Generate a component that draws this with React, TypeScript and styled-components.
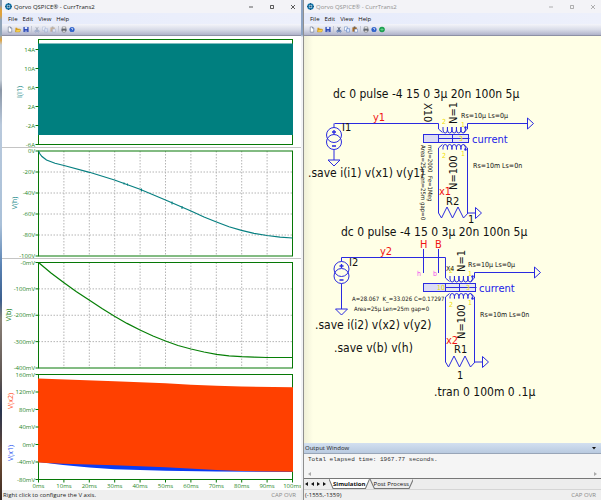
import React from "react";
import styled, { createGlobalStyle } from "styled-components";

const UI = `"Open Sans", "Noto Sans", sans-serif`;
const TAHOMA = `"DejaVu Sans Condensed", "DejaVu Sans", sans-serif`;

const GlobalStyle = createGlobalStyle`
  * { box-sizing: border-box; }
  body { margin: 0; background: #fff; font-family: ${UI}; font-size: 6px; }
  button { font: inherit; color: inherit; background: none; border: 0; padding: 0; margin: 0; }
`;

const Desktop = styled.main`
  display: grid;
  grid-template-columns: 2px minmax(0, 299fr) 2px minmax(0, 298fr);
  height: 100vh;
  overflow: hidden;
`;
const Wallpaper = styled.div`
  background: linear-gradient(#8a9bb0 0 1%, #e0a23a 2% 3%, #8fa3b8 4% 7%, #e0a23a 8%, #c3ccd6 9% 16%, #8b96a6 18%, #b9c9dc 25%, #a9c0d8 45%, #5a83b4 53%, #3c5f8e 60%, #8a8078 64%, #5b5350 76%, #28344f 82%, #6d4a32 92%, #3a2b25);
`;
const Gap = styled.div`
  background: linear-gradient(#8da4c4 0 7%, #f2f3f6 7.4% 97.6%, #e8e8e8 98%);
`;
const Window = styled.section<{ $framed?: boolean }>`
  display: flex;
  flex-direction: column;
  min-width: 0;
  min-height: 0;
  background: #fff;
  border-left: ${(p) => (p.$framed ? "1px solid #8f8f8f" : "0")};
`;
const TitleBar = styled.header<{ $inactive?: boolean }>`
  display: flex;
  align-items: center;
  flex: 0 0 13px;
  padding: 0 4px 0 3px;
  gap: 2px;
  background: #f3f3f7;
  color: ${(p) => (p.$inactive ? "#909090" : "#1a1a1a")};
`;
const Title = styled.h1`
  flex: 1;
  margin: 0;
  font-size: 6px;
  line-height: 12px;
  font-weight: 400;
`;
const Controls = styled.div`
  display: flex;
  gap: 13px;
`;
const ControlButton = styled.button`
  display: flex;
  width: 8px;
  height: 8px;
  align-items: center;
  justify-content: center;
`;
const MenuBar = styled.nav`
  display: flex;
  align-items: center;
  flex: 0 0 11px;
  gap: 5px;
  padding-left: 6px;
  background: linear-gradient(90deg, #e6ebfb, #edf0fb);
  color: #111;
`;
const ToolBar = styled.div`
  display: flex;
  align-items: center;
  flex: 0 0 12px;
  gap: 2px;
  padding-left: 5px;
  background: linear-gradient(#f4f5fa, #d9dce8 50%, #b0b3ca);
  border-bottom: 1px solid #8d90a4;
`;
const ToolButton = styled.button<{ $faded?: boolean }>`
  display: flex;
  width: 6px;
  height: 7px;
  opacity: ${(p) => (p.$faded ? 0.4 : 1)};
`;
const Divider = styled.span`
  width: 1px;
  height: 7px;
  background: #c2c5d3;
`;
const StatusBar = styled.footer`
  display: flex;
  align-items: center;
  justify-content: space-between;
  flex: 0 0 10px;
  padding: 0 5px 0 1px;
  background: #efefef;
  color: #222;
`;
const Keys = styled.span`
  color: #8a8a8a;
`;
const Panes = styled.div`
  display: grid;
  flex: 1;
  min-height: 0;
  grid-template-rows: minmax(0, 112fr) minmax(0, 111fr) minmax(0, 112fr) minmax(0, 119fr);
`;
const Plot = styled.svg`
  display: block;
  width: 100%;
  height: 100%;
  min-height: 0;
  font-family: ${UI};
  font-size: 6px;
`;
const TickText = styled.text`
  fill: #1f861f;
`;
const TraceName = styled.text<{ $color: string }>`
  fill: ${(p) => p.$color};
  font-size: 7px;
  text-anchor: middle;
`;
const Sheet = styled.div`
  flex: 1;
  min-height: 0;
  background: linear-gradient(90deg, #efefd8, #ffffe6 3%);
`;
const Drawing = styled.svg`
  display: block;
  width: 100%;
  height: 100%;
  fill: none;
  stroke: #2a2ae0;
  stroke-width: 1px;
`;
type LabelProps = { $color?: string; $size?: number };
const Label = styled.text<LabelProps>`
  stroke: none;
  fill: ${(p) => p.$color ?? "#111"};
  font-family: ${TAHOMA};
  font-size: ${(p) => p.$size ?? 11}px;
  white-space: pre;
`;
const OutputTitle = styled.div`
  display: flex;
  align-items: center;
  justify-content: space-between;
  flex: 0 0 11px;
  padding: 0 3px 0 1px;
  background: linear-gradient(#d3e0f0, #b9cae0);
  border-bottom: 1px solid #98a5b8;
  color: #222;
`;
const OutputBody = styled.div`
  flex: 0 0 24px;
  display: flex;
  flex-direction: column;
  justify-content: space-between;
  padding: 2px 4px 0;
  background: #f5f5f5;
`;
const OutputText = styled.pre`
  margin: 0;
  font: 6px/8px "Liberation Mono", monospace;
  color: #333;
`;
const ScrollRow = styled.div`
  display: flex;
  justify-content: space-between;
  padding: 0 0 2px;
`;
const Tabs = styled.div`
  display: flex;
  align-items: flex-start;
  flex: 0 0 12px;
  border-top: 1px solid #777;
  border-bottom: 1px solid #d5d5d5;
  background: #ededed;
`;
const TabArrows = styled.div`
  display: flex;
  width: 25px;
  gap: 3px;
  padding: 3px 0 0 1px;
`;
const ArrowButton = styled.button`
  display: flex;
  width: 3px;
  height: 4px;
`;
const TabSvg = styled.svg`
  position: absolute;
  inset: 0;
  width: 100%;
  height: 100%;
  stroke: #777;
  stroke-width: 1px;
`;
const Tab = styled.button<{ $active?: boolean }>`
  position: relative;
  height: 10px;
  padding: 0 4px;
  line-height: 9px;
  font-weight: ${(p) => (p.$active ? 700 : 400)};
  color: #111;
  ${TabSvg} { fill: ${(p) => (p.$active ? "#fff" : "#eee")}; }
`;
const TabText = styled.span`
  position: relative;
`;

const Logo = () => (
  <svg width="7" height="7" viewBox="0 0 14 14" aria-hidden="true">
    <circle cx="7" cy="7" r="5" fill="#b9e2f3" stroke="#1674a8" strokeWidth="3" />
    <path d="M7 0v3M7 11v3M0 7h3M11 7h3" stroke="#155780" strokeWidth="2" />
    <circle cx="7" cy="7" r="2.2" fill="#1f4f78" />
  </svg>
);

const toolIcons: Record<string, React.ReactNode> = {
  New: <path d="M3 1h5l3 3v9H3zM8 1v3h3" fill="#fff" stroke="#3c4c70" />,
  Open: <><path d="M1 12V3h4l1 2h5v7z" fill="#d99b18" /><path d="M3 7h11l-3 6H1z" fill="#f6cf4c" stroke="#a36c00" strokeWidth=".7" /></>,
  Save: <><path d="M1 1h12v12H1z" fill="#2846b4" /><path d="M4 1h6v5H4z" fill="#dbe4ff" /><path d="M4 9h6v4H4z" fill="#8798d8" /></>,
  Cut: <><path d="M4 1l5 9M10 1L5 10" stroke="#333e50" strokeWidth="1.6" /><circle cx="4" cy="11" r="2" fill="none" stroke="#1c4ea0" strokeWidth="1.5" /><circle cx="10" cy="11" r="2" fill="none" stroke="#1c4ea0" strokeWidth="1.5" /></>,
  Copy: <><path d="M1 1h7v8H1z" fill="#fff" stroke="#3c65b0" /><path d="M6 5h7v8H6z" fill="#dce9ff" stroke="#3c65b0" /></>,
  Paste: <><path d="M1 2h10v10H1z" fill="#a66a23" /><path d="M4 0h4v3H4z" fill="#555" /><path d="M6 6h7v7H6z" fill="#fff" stroke="#3c65b0" /></>,
  Print: <><path d="M3 1h8v5H3z" fill="#fff" stroke="#444" /><path d="M1 5h12v6H1z" fill="#666b74" /><path d="M4 9h6v4H4z" fill="#fff" stroke="#444" /></>,
  Help: <><circle cx="7" cy="7" r="6" fill="#2b5fc9" /><path d="M5 5q2-3 4 0 0 2-2 3M7 10v1" fill="none" stroke="#fff" strokeWidth="1.6" /></>,
  Run: <><circle cx="7" cy="7" r="6.5" fill="#179c4a" /><path d="M3 7h8M7 3v8" stroke="#7ce0a0" strokeWidth="1.5" /></>,
};

function Chrome({ inactive, editable }: { inactive?: boolean; editable?: boolean }) {
  const names = ["New", "Open", "Save", "|", "Cut", "Copy", "Paste", "|", "Print", "Help"];
  if (editable) names.push("Run");
  return (
    <>
      <TitleBar $inactive={inactive}>
        <Logo />
        <Title>Qorvo QSPICE® - CurrTrans2</Title>
        <Controls>
          {[["Minimize", "M2 4h4"], ["Maximize", "M2.5 2.5h3v3h-3z"], ["Close", "M2 2l4 4M6 2l-4 4"]].map(([n, d]) => (
            <ControlButton key={n} aria-label={n}>
              <svg width="8" height="8" viewBox="0 0 8 8"><path d={d} fill="none" stroke="currentColor" strokeWidth=".7" /></svg>
            </ControlButton>
          ))}
        </Controls>
      </TitleBar>
      <MenuBar aria-label="Menu">
        {["File", "Edit", "View", "Help"].map((m) => <button key={m}>{m}</button>)}
      </MenuBar>
      <ToolBar role="toolbar">
        {names.map((n, i) => n === "|" ? <Divider key={i} /> : (
          <ToolButton key={n} aria-label={n} $faded={!editable && ["Cut", "Copy", "Paste"].includes(n)}>
            <svg width="6" height="7" viewBox="0 0 14 14">{toolIcons[n]}</svg>
          </ToolButton>
        ))}
      </ToolBar>
    </>
  );
}

const LEFT = 38.5;
const RIGHT = 292.5;
const STEP = 25.4;

type PaneProps = {
  y: number; h: number; top: number; bottom: number; ticks: string[];
  first?: number; grid?: boolean; children: React.ReactNode;
};
function Pane({ y, h, top, bottom, ticks, first, grid, children }: PaneProps) {
  const start = first ?? top;
  const gap = (bottom - start) / (ticks.length - 1);
  return (
    <Plot viewBox={`2 ${y} 299 ${h}`} preserveAspectRatio="none">
      {grid && (
        <g stroke="#b4b4b4" strokeDasharray="1.5 1.5">
          {Array.from({ length: 9 }, (_, i) => (
            <path key={i} d={`M${LEFT + STEP * (i + 1)} ${top}V${bottom}`} />
          ))}
          {ticks.slice(1, -1).map((t, i) => <path key={t} d={`M${LEFT} ${start + gap * (i + 1)}H${RIGHT}`} />)}
        </g>
      )}
      <rect x={LEFT} y={top} width={RIGHT - LEFT} height={bottom - top} fill="none" stroke="#067806" />
      {children}
      {ticks.map((t, i) => (
        <g key={t}>
          <path d={`M35.5 ${start + gap * i}H38.5`} stroke="#067806" />
          <TickText x="35" y={start + gap * i + 2} textAnchor="end">{t}</TickText>
        </g>
      ))}
    </Plot>
  );
}

const curve = (pts: number[][]) => "M" + pts.map((p) => p.join(" ")).join("L");

function Waveforms() {
  return (
    <Panes>
      <Pane y={36} h={112} top={39.5} bottom={144.5} first={49.5} ticks={["14A", "10A", "6A", "2A", "-2A", "-6A"]}>
        <rect x="38" y="43.5" width="255" height="91.5" fill="#007f7f" />
        <path d="M2 147.5H301" stroke="#c4c4c4" />
        <TraceName $color="#118585" transform="translate(22 92) rotate(-90)">I(I1)</TraceName>
      </Pane>
      <Pane y={148} h={111} top={151} bottom={256} grid ticks={["0V", "-20V", "-40V", "-60V", "-80V", "-100V"]}>
        <path
          d={curve([[38.5, 151], [40, 154], [42, 156.5], [46.5, 160], [55, 163.3], [64, 165.5], [89.5, 172.3], [114.5, 180], [140, 189.3], [165.5, 200], [191, 211], [204, 217], [216.5, 222], [229, 226.8], [241.5, 230.3], [254, 233.3], [267, 235.5], [280, 237.2], [292.5, 238]])}
          fill="none" stroke="#067f80" strokeWidth="1.2"
        />
        <path d="M124 182.5v2M127.5 183.5v2M141.5 188.5v3M172 201.5v3M182 206v3" stroke="#067f80" />
        <path d="M2 258.5H301" stroke="#c4c4c4" />
        <TraceName $color="#118585" transform="translate(17 203) rotate(-90)">V(h)</TraceName>
      </Pane>
      <Pane y={259} h={112} top={262.5} bottom={368} grid ticks={["-0mV", "-100mV", "-200mV", "-300mV", "-400mV"]}>
        <path
          d={curve([[38.5, 262.5], [51, 273], [64, 282.7], [76.5, 291.8], [89.5, 300.3], [102, 308.5], [114.5, 316.3], [127, 323.4], [140, 330], [153, 336], [165.5, 341], [178, 345.5], [191, 349], [204, 352], [216.5, 354.3], [229, 355.8], [241.5, 356.7], [254, 357.2], [267, 357.5], [292.5, 357.5]])}
          fill="none" stroke="#067f06" strokeWidth="1.2"
        />
        <TraceName $color="#178017" transform="translate(11 315) rotate(-90)">V(b)</TraceName>
      </Pane>
      <Pane y={371} h={119} top={374.5} bottom={479.5} ticks={["160mV", "120mV", "80mV", "40mV", "0mV", "-40mV", "-80mV"]}>
        <path d={curve([[38, 462], [63, 465], [89.5, 467.5], [114.5, 469.3], [165.5, 470.7], [216.5, 471.5], [293, 472], [293, 460], [38, 460]]) + "Z"} fill="#0a3cf5" />
        <path d={curve([[38, 378.5], [114.5, 381.3], [165.5, 383.3], [191, 384.7], [216.5, 385.8], [241.5, 386.5], [293, 387.3], [293, 471.7], [241.5, 471], [216.5, 470], [165.5, 467.3], [114.5, 465.3], [63, 463.8], [38, 462.5]]) + "Z"} fill="#ff4000" />
        <TraceName $color="#ff4b18" transform="translate(13 401) rotate(-90)">V(x2)</TraceName>
        <TraceName $color="#2450f0" transform="translate(13 453) rotate(-90)">V(x1)</TraceName>
        {Array.from({ length: 11 }, (_, i) => (
          <g key={i}>
            <path d={`M${LEFT + STEP * i} 479.5v3`} stroke="#067806" />
            <TickText x={LEFT + STEP * i} y="488" textAnchor="middle">{i * 10}ms</TickText>
          </g>
        ))}
      </Pane>
    </Panes>
  );
}

/* Current source with its top wire entry at (x, y) and ground at groundY. */
function Source({ x, y, groundY }: { x: number; y: number; groundY: number }) {
  return (
    <g>
      <path d={`M${x} ${y}v4M${x} ${y + 26}V${groundY}M${x - 6} ${groundY}h12l-6 6z`} />
      <circle cx={x} cy={y + 11.5} r="7.5" />
      <circle cx={x} cy={y + 18.5} r="7.5" />
      <path d={`M${x - 2} ${y + 8.5}h4m-2 -2v4M${x - 2} ${y + 22.5}h4`} strokeWidth="1.3" />
    </g>
  );
}

/* Two windings on a core, with load resistor and output arrows. */
function Transformer({ dx, dy, coreLeft }: { dx: number; dy: number; coreLeft: number }) {
  const xs = [443, 447.5, 452, 456.5, 461];
  return (
    <g transform={`translate(${dx} ${dy})`}>
      <rect x={coreLeft} y="134.5" width={438.5 - coreLeft} height="8" fill="#dcdcf4" />
      <rect x="438.5" y="134.5" width="30" height="8" fill="#e8e8ee" />
      <path d="M452.5 134.5v8M438.5 138.5h31" />
      <path d="M438.5 129l4 3.5M463.5 132.5l4 -3.5V123.5H527.5" />
      <path d={xs.map((x) => `M${x} 127v3q0 3 2.2 3t2.2 -3v-3`).join("")} />
      <path d="M438.5 213V148l4 -3.5M463.5 144.5l4 3.5V213H475" />
      <path d={xs.map((x) => `M${x} 149.5v-2q0 -3 2.2 -3t2.2 3v2`).join("")} />
      <path d="M527.5 118v11l6 -5.5zM475.5 207.5v11l6 -5.5z" />
      <path d="M438.5 213l3 5 5.5 -11 5.5 11 5.5 -11 5.5 11 4.5 -5" />
      <circle cx="465.5" cy="127.5" r="1.2" fill="#2a2ae0" stroke="none" />
      <circle cx="465.5" cy="149.5" r="1.2" fill="#2a2ae0" stroke="none" />
      <Label $size={7} $color="#f0e000" x="442" y="124">2</Label>
      <Label $size={7} $color="#f0e000" x="461" y="127">1</Label>
      <Label $size={7} $color="#f0e000" x="442" y="158">2</Label>
      <Label $size={7} $color="#f0e000" x="461" y="156">1</Label>
      <Label $size={7} $color="#f0e000" x="459" y="141">3</Label>
    </g>
  );
}

type Note = { t: string; x: number; y: number; s?: number; c?: string; r?: number };
const RED = "#f01414";
const BLUE = "#2222e6";
const notes: Note[] = [
  { t: "dc 0 pulse -4 15 0 3µ 20n 100n 5µ", x: 333, y: 98, s: 12 },
  { t: "I1", x: 342, y: 131 },
  { t: "y1", x: 373, y: 121, c: RED },
  { t: ".save i(i1) v(x1) v(y1)", x: 308, y: 177, s: 12 },
  { t: "X10", x: 424, y: 103, r: 90 },
  { t: "N=1", x: 457, y: 124, r: -90 },
  { t: "N=100", x: 457, y: 190, r: -90 },
  { t: "Rs=10µ Ls=0µ", x: 461, y: 118, s: 7 },
  { t: "Rs=10m Ls=0n", x: 473, y: 168, s: 7 },
  { t: "current", x: 472, y: 143, c: BLUE },
  { t: "x1", x: 439, y: 195, c: RED },
  { t: "R2", x: 446, y: 205 },
  { t: "1", x: 468, y: 223 },
  { t: "mU=2000  Fe=1Meg", x: 428, y: 145, s: 6, r: 90 },
  { t: "Area=25µ Len=25m gap=0", x: 421, y: 145, s: 6, r: 90 },
  { t: "dc 0 pulse -4 15 0 3µ 20n 100n 5µ", x: 341, y: 236, s: 12 },
  { t: "I2", x: 349, y: 266 },
  { t: "y2", x: 380, y: 255, c: RED },
  { t: "H", x: 420, y: 248, c: RED },
  { t: "B", x: 435, y: 248, c: RED },
  { t: "h", x: 417, y: 276, s: 7, c: "#f050f0" },
  { t: "b", x: 433, y: 276, s: 7, c: "#f050f0" },
  { t: "X4", x: 446, y: 271, s: 7 },
  { t: "N=1", x: 465, y: 272, r: -90 },
  { t: "N=100", x: 465, y: 339, r: -90 },
  { t: "Rs=10µ Ls=0µ", x: 468, y: 267, s: 7 },
  { t: "Rs=10m Ls=0n", x: 480, y: 317, s: 7 },
  { t: "current", x: 479, y: 292, c: BLUE },
  { t: "10", x: 437, y: 290, s: 7, c: "#f0e000" },
  { t: "A=28.067  K_=33.026 C=0.17297", x: 352, y: 301, s: 6 },
  { t: "Area=25µ Len=25m gap=0", x: 354, y: 311, s: 6 },
  { t: ".save i(i2) v(x2) v(y2)", x: 315, y: 329, s: 12 },
  { t: ".save v(b) v(h)", x: 334, y: 352, s: 12 },
  { t: "x2", x: 446, y: 344, c: RED },
  { t: "R1", x: 454, y: 353 },
  { t: "1", x: 457, y: 379 },
  { t: ".tran 0 100m 0 .1µ", x: 434, y: 396, s: 12 },
];

function Schematic() {
  return (
    <Drawing viewBox="304 36 297 407" preserveAspectRatio="xMinYMin meet">
      <path d="M334.5 123.5H438.5V129M341.5 257.5H445.5V278M423.5 249v24M438.5 249v24" />
      <Source x={334} y={123.5} groundY={160} />
      <Source x={341.5} y={257.5} groundY={309} />
      <Transformer dx={0} dy={0} coreLeft={423.5} />
      <Transformer dx={7} dy={149} coreLeft={416.5} />
      {notes.map((n, i) => (
        <Label key={i} $size={n.s} $color={n.c} transform={`translate(${n.x} ${n.y}) rotate(${n.r ?? 0})`}>{n.t}</Label>
      ))}
    </Drawing>
  );
}

const Triangle = ({ left, color }: { left?: boolean; color?: string }) => (
  <svg width="3" height="4" viewBox="0 0 3 4" aria-hidden="true">
    <path d={left ? "M3 0v4L0 2z" : "M0 0v4l3-2z"} fill={color ?? "#111"} />
  </svg>
);

export default function App() {
  return (
    <>
      <GlobalStyle />
      <Desktop>
        <Wallpaper />
        <Window>
          <Chrome />
          <Waveforms />
          <StatusBar>
            <span>Right click to configure the V axis.</span>
            <Keys>CAP OVR</Keys>
          </StatusBar>
        </Window>
        <Gap />
        <Window $framed>
          <Chrome inactive editable />
          <Sheet><Schematic /></Sheet>
          <OutputTitle>
            <span>Output Window</span>
            <ControlButton aria-label="Window menu">
              <svg width="4" height="3" viewBox="0 0 4 3"><path d="M0 0h4L2 2.5z" fill="#111" /></svg>
            </ControlButton>
          </OutputTitle>
          <OutputBody>
            <OutputText>Total elapsed time: 1967.77 seconds.</OutputText>
            <ScrollRow><Triangle left color="#aaa" /><Triangle color="#aaa" /></ScrollRow>
          </OutputBody>
          <Tabs>
            <TabArrows>
              {["First", "Previous", "Next", "Last"].map((n, i) => (
                <ArrowButton key={n} aria-label={n}><Triangle left={i < 2} /></ArrowButton>
              ))}
            </TabArrows>
            {["Simulation", "Post Process"].map((n, i) => (
              <Tab key={n} $active={i === 0}>
                <TabSvg viewBox="0 0 40 10" preserveAspectRatio="none"><path d="M0 0L4 9.5H36L40 0" /></TabSvg>
                <TabText>{n}</TabText>
              </Tab>
            ))}
          </Tabs>
          <StatusBar>
            <span>(-1555,-1359)</span>
            <Keys>CAP OVR</Keys>
          </StatusBar>
        </Window>
      </Desktop>
    </>
  );
}
